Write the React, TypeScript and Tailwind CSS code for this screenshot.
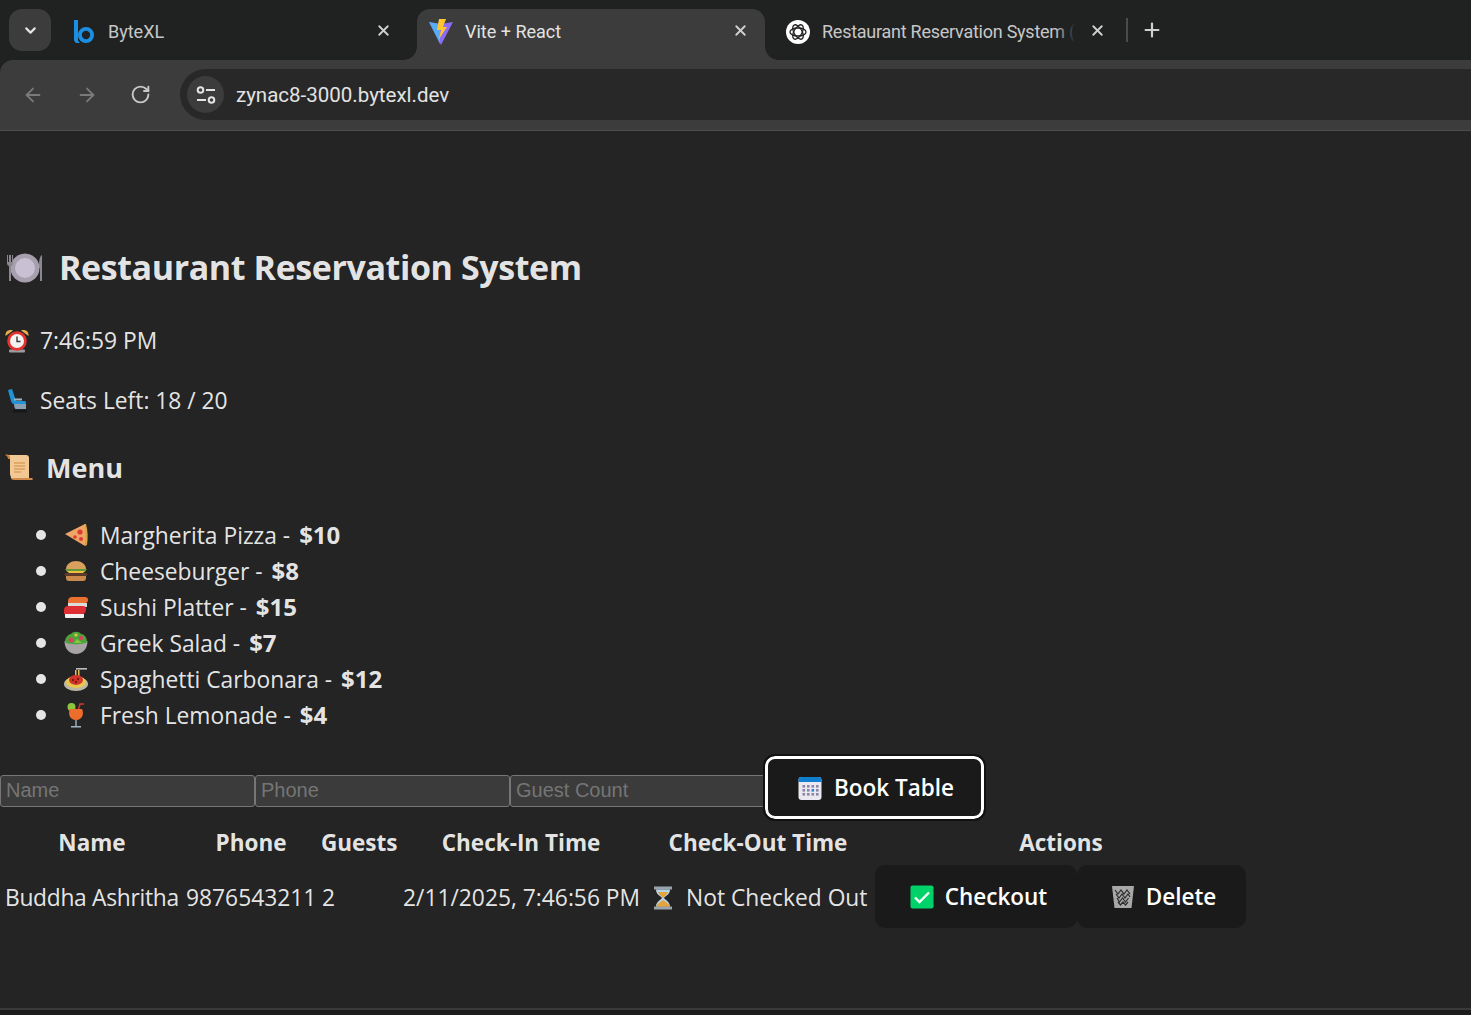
import { ArrowLeft, ArrowRight, ChevronDown, Plus, RotateCw, X } from "lucide-react";
import type { ReactNode } from "react";

// small emoji drawings, there is no colour emoji font on the box
function Plate() {
    return (
        <svg width="38" height="32" viewBox="0 0 38 32" className="mt-[2px] shrink-0">
            <circle cx="19" cy="16" r="14.5" fill="#a79fad" />
            <circle cx="19" cy="16" r="10" fill="#c9c1d3" />
            <path d="M1 3v8c0 2 1 3 2 3v15h2V14c1 0 2-1 2-3V3H6v7H5V3H3v7H2V3z" fill="#8b8690" />
            <path d="M36 3c-2 1-3 5-3 10v3h1v13h2z" fill="#8b8690" />
        </svg>
    );
}

function AlarmClock() {
    return (
        <svg width="24" height="24" viewBox="0 0 24 24" className="shrink-0">
            <path d="M0.500 7C0 2 4 0 8 1.500zM23.500 7C24 2 20 0 16 1.500z" fill="#e3b04b" />
            <rect x="4" y="20.500" width="16" height="3" rx="1" fill="#9b9ba1" />
            <circle cx="12" cy="12" r="9.800" fill="#e2332f" />
            <circle cx="12" cy="12" r="7" fill="#f5f2f2" />
            <path d="M12 7.500V12.500H15.500" stroke="#3a3a3a" strokeWidth="1.400" fill="none" />
        </svg>
    );
}

function Seat() {
    return (
        <svg width="20" height="24" viewBox="0 0 20 24" className="shrink-0">
            <path d="M1 1l4-1 4 12h9c1 0 1 2 1 3H7c-2 0-2-1-3-3z" fill="#1f93d6" />
            <rect x="7" y="9.500" width="8" height="2" fill="#9fb5c5" />
            <path d="M7 15h12v5H9c-1 0-2-2-2-5z" fill="#8aa0b0" />
            <rect x="6" y="21" width="14" height="2.500" fill="#15181b" />
        </svg>
    );
}

function Scroll() {
    return (
        <svg width="28" height="28" viewBox="0 0 28 28" className="shrink-0">
            <path d="M0 1c3-1 5 0 6 2v2H3C3 3 2 2 0 1z" fill="#c47c3b" />
            <path d="M3 1h18c2 0 3 1 3 3v20H6c0-2-1-3-1-4V4C5 2 4 1 3 1z" fill="#f2c994" />
            <path d="M9 9h11M9 12h11M9 15h11M9 18h7" stroke="#cf8a45" strokeWidth="1" />
            <path d="M6 24h21c1 0 1 2 0 2H9c-2 0-3-1-3-2z" fill="#d18b4a" />
        </svg>
    );
}

function Pizza() {
    return (
        <svg width="24" height="24" viewBox="0 0 24 24" className="shrink-0">
            <path d="M1 11L21 1c2 6 2 15 0 22z" fill="#eea565" />
            <path d="M20 1c2 6 2 16 1 22l2-1c1-7 1-14-1-21z" fill="#dba63e" />
            <circle cx="16" cy="9" r="2.600" fill="#de3b32" />
            <circle cx="11" cy="14" r="1.800" fill="#de3b32" />
            <circle cx="17" cy="16" r="2" fill="#de3b32" />
        </svg>
    );
}

function Burger() {
    return (
        <svg width="24" height="20" viewBox="0 0 24 20" className="shrink-0">
            <path d="M2 8C2 3 7 0 12 0s10 3 10 8z" fill="#d9a05e" />
            <path d="M1 8h22l-2 3H3z" fill="#5f9b3b" />
            <path d="M3 10h18l-2 2H5z" fill="#efc03f" />
            <rect x="0.500" y="12" width="23" height="3" rx="1.500" fill="#5b3a2a" />
            <path d="M2 15h20v2c0 2-1 3-3 3H5c-2 0-3-1-3-3z" fill="#c98a4b" />
        </svg>
    );
}

function Sushi() {
    return (
        <svg width="24" height="22" viewBox="0 0 24 22" className="shrink-0">
            <path d="M4 7h19v4H4z" fill="#dcdcdc" />
            <path d="M4 5c0-3 2-4 4-4h13c2 0 3 1 3 3s-1 3-3 3H4z" fill="#ea7131" />
            <path d="M1 18h19v3c0 1-1 1-2 1H3c-1 0-2 0-2-1z" fill="#f1f1f1" />
            <path d="M0 14c0-3 2-4 4-4h15c2 0 3 1 3 3s-1 5-3 5H0z" fill="#dd2f33" />
        </svg>
    );
}

function Salad() {
    return (
        <svg width="24" height="24" viewBox="0 0 24 24" className="shrink-0">
            <path d="M0.500 10h23c0 8-5 13-11.500 13S0.500 18 0.500 10z" fill="#a8a3a5" />
            <path d="M1 11c0-5 4-8 6-8 2-3 8-3 10 0 3 0 6 3 6 8-3 3-19 3-22 0z" fill="#4aa53b" />
            <circle cx="7" cy="9" r="2.500" fill="#d8425b" />
            <circle cx="17" cy="7" r="2.200" fill="#d8425b" />
            <circle cx="12" cy="4" r="1.600" fill="#e8c63f" />
            <path d="M13 8l5 4h-8z" fill="#8cc63f" />
        </svg>
    );
}

function Spaghetti() {
    return (
        <svg width="24" height="24" viewBox="0 0 24 24" className="shrink-0">
            <path d="M12 1h11v1.600H12z" fill="#bdbdbd" />
            <path d="M11 3h1.500v7H11zM14 3h1.500v7H14z" fill="#e3bd5a" />
            <ellipse cx="12" cy="17" rx="12" ry="7" fill="#bcb7a5" />
            <ellipse cx="12" cy="15" rx="10" ry="6" fill="#e8c84d" />
            <ellipse cx="12" cy="13" rx="7" ry="5" fill="#d3352c" />
            <circle cx="9" cy="13" r="1.200" fill="#7a1a14" />
            <circle cx="14" cy="12" r="1.200" fill="#7a1a14" />
            <circle cx="12" cy="15" r="1.200" fill="#7a1a14" />
        </svg>
    );
}

function Cocktail() {
    return (
        <svg width="24" height="26" viewBox="0 0 24 26" className="shrink-0">
            <circle cx="7.500" cy="5" r="4" fill="#8cc63f" />
            <path d="M14 9l2-7h4" stroke="#d8332c" strokeWidth="1.500" fill="none" />
            <path d="M6 7h12c2 4 1 11-6 11S4 11 6 7z" fill="#ed6d2d" />
            <path d="M11.300 18h1.400v6h-1.400z" fill="#9fb5c5" />
            <path d="M7 24h10v1.500H7z" fill="#9fb5c5" />
        </svg>
    );
}

function Calendar() {
    return (
        <svg width="24" height="24" viewBox="0 0 24 24" className="shrink-0">
            <rect x="0.500" y="1" width="23" height="23" rx="3" fill="#ece8f2" />
            <path d="M0.500 6V4c0-2 1-3 3-3h17c2 0 3 1 3 3v2z" fill="#0f7fd0" />
            {[6, 10.500, 15, 19.500].map((x) =>
                [9, 13, 17].map((y) => <rect key={`${x}-${y}`} x={x - 1.500} y={y} width="2.600" height="2.600" fill={x === 15 && y === 13 ? "#2f86d8" : "#8a86a3"} />),
            )}
        </svg>
    );
}

function CheckBox() {
    return (
        <svg width="24" height="24" viewBox="0 0 24 24" className="shrink-0">
            <rect x="0.500" y="0.500" width="23" height="23" rx="2" fill="#00d26a" />
            <path d="M5 12.500l4.500 4.500L19 7.500" stroke="#f5fff9" strokeWidth="2.400" fill="none" />
        </svg>
    );
}

function Wastebasket() {
    return (
        <svg width="24" height="24" viewBox="0 0 24 24" className="shrink-0">
            <path d="M1 1h22l-2.500 22h-17z" fill="#a8a8a8" />
            <path d="M4 5l3 4 3-4 3 4 3-4 3 4M5 9l3 4 3-4 3 4 3-4 2 3M6 13l2.500 4 3-4 3 4 3-4M7 17l2.500 3 2.500-3 2.500 3 2.500-3" stroke="#2b2b2b" strokeWidth="1.200" fill="none" />
        </svg>
    );
}

function Hourglass() {
    return (
        <svg width="20" height="24" viewBox="0 0 20 24" className="shrink-0">
            <rect x="1" y="0.500" width="18" height="3" fill="#9aa4ad" />
            <rect x="1" y="20.500" width="18" height="3" fill="#9aa4ad" />
            <path d="M3 3.500h14c0 5-4 6-6 8.500 2 2.500 6 4 6 8.500H3c0-4.500 4-6 6-8.500-2-2.500-6-3.500-6-8.500z" fill="#b7d3e6" />
            <path d="M5 6h10c-1 3-4 4-5 6-1-2-4-3-5-6zM3.500 20.500C4 17 8 16 10 14c2 2 6 3 6.500 6.500z" fill="#e5a43b" />
        </svg>
    );
}

function ByteXLLogo() {
    return (
        <svg width="20" height="24" viewBox="0 0 20 24">
            <path d="M0 0h4v20c0 1 1 2 2 3H2c-1-1-2-2-2-3z" fill="#1b8fe3" />
            <path d="M12 7a8 8 0 1 0 0 16 8 8 0 0 0 0-16zm0 3.800a4.200 4.200 0 1 1 0 8.400 4.200 4.200 0 0 1 0-8.400z" fill="#1b8fe3" />
        </svg>
    );
}

function ViteLogo() {
    return (
        <svg width="26" height="26" viewBox="0 0 26 26">
            <path d="M1 3l12 2 12-2-12 23z" fill="#8c6cf5" />
            <path d="M1 3l11 2v20z" fill="#41c6f5" opacity="0.700" />
            <path d="M11 0h7l-3 8h4l-8 12 2-9H9z" fill="#ffc62e" />
        </svg>
    );
}

function ChatLogo() {
    return (
        <svg width="24" height="24" viewBox="0 0 24 24">
            <circle cx="12" cy="12" r="12" fill="#fff" />
            <g stroke="#222" strokeWidth="1.300" fill="none">
                <ellipse cx="12" cy="12" rx="8" ry="4" />
                <ellipse cx="12" cy="12" rx="8" ry="4" transform="rotate(60 12 12)" />
                <ellipse cx="12" cy="12" rx="8" ry="4" transform="rotate(120 12 12)" />
            </g>
        </svg>
    );
}

function SiteInfo() {
    return (
        <svg width="20" height="20" viewBox="0 0 20 20" fill="none" stroke="#e3e3e3" strokeWidth="2">
            <circle cx="4.500" cy="5" r="2.800" />
            <path d="M10 5h9M1 15h9" />
            <circle cx="15.500" cy="15" r="2.800" />
        </svg>
    );
}

function Tab({ logo, title, active, fade }: { logo: ReactNode; title: string; active?: boolean; fade?: boolean }) {
    return (
        <div className={`relative flex h-[51px] w-[348px] shrink-0 items-center pb-[5px] ${active ? "rounded-t-[13px] bg-[#3c3c3c] text-[#e3e3e3]" : "text-[#c7c7c7]"}`}>
            {active && (
                <>
                    <span className="absolute -left-[13px] bottom-0 size-[13px] bg-[radial-gradient(circle_at_0_0,transparent_12.500px,#3c3c3c_13px)]" />
                    <span className="absolute -right-[13px] bottom-0 size-[13px] bg-[radial-gradient(circle_at_100%_0,transparent_12.500px,#3c3c3c_13px)]" />
                </>
            )}
            <span className="flex w-[48px] justify-center">{logo}</span>
            <span className={`w-[253px] overflow-hidden whitespace-nowrap font-['Roboto',sans-serif] text-[18px] ${fade ? "tracking-[-0.25px]" : ""}`}>{title}</span>
            {fade && <span className="absolute left-[281px] top-0 h-full w-[20px] bg-gradient-to-r from-transparent to-[#202222]" />}
            <X size={17} strokeWidth={2.600} className="absolute right-[16px] top-[13px] text-[#d0d0d0]" />
        </div>
    );
}

function Browser() {
    return (
        <div className="bg-[#202222]">
            <div className="flex h-[60px] items-end gap-[9px] pl-[9px]">
                <div className="mb-[9px] flex size-[42px] items-center justify-center rounded-[13px] bg-[#3c3c3c]">
                    <ChevronDown size={17} strokeWidth={3} className="text-[#e3e3e3]" />
                </div>
                <Tab logo={<ByteXLLogo />} title="ByteXL" />
                <Tab logo={<ViteLogo />} title="Vite + React" active />
                <Tab logo={<ChatLogo />} title="Restaurant Reservation System (" fade />
                <div className="mb-[18px] ml-[-5px] h-[24px] w-[2px] shrink-0 bg-[#4a4c4c]" />
                <Plus size={22} strokeWidth={2.400} className="mb-[19px] ml-[4px] shrink-0 text-[#d0d0d0]" />
            </div>
            <div className="flex h-[70px] items-start rounded-tl-[13px] bg-[#3c3c3c] pt-[9px]">
                <div className="flex h-[51px] w-[180px] items-center gap-[32px] pl-[22px]">
                    <ArrowLeft size={22} strokeWidth={2} className="text-[#7a7a7a]" />
                    <ArrowRight size={22} strokeWidth={2} className="text-[#7a7a7a]" />
                    <RotateCw size={21} strokeWidth={2.200} className="text-[#c8c8c8]" />
                </div>
                <div className="flex h-[51px] flex-1 items-center rounded-l-full bg-[#282828]">
                    <div className="ml-[7px] flex size-[37px] items-center justify-center rounded-full bg-[#3c3c3c]">
                        <SiteInfo />
                    </div>
                    <span className="ml-[12px] font-['Roboto',sans-serif] text-[20.500px] text-[#e3e3e3]">zynac8-3000.bytexl.dev</span>
                </div>
            </div>
            <div className="h-[1px] bg-[#4c4c4c]" />
        </div>
    );
}

const menu: [ReactNode, string, string][] = [
    [<Pizza />, "Margherita Pizza", "$10"],
    [<Burger />, "Cheeseburger", "$8"],
    [<Sushi />, "Sushi Platter", "$15"],
    [<Salad />, "Greek Salad", "$7"],
    [<Spaghetti />, "Spaghetti Carbonara", "$12"],
    [<Cocktail />, "Fresh Lemonade", "$4"],
];

const inputClass = "mt-[19px] h-[32px] w-[255px] rounded-[3px] border border-[#767676] bg-[#3b3b3b] px-[5px] pb-[2px] font-['Liberation_Sans',sans-serif] text-[20px] placeholder:text-[#757575]";
const buttonClass = "flex h-[63px] items-center gap-[11px] rounded-[10px] bg-[#1a1a1a] text-[22.500px] font-semibold text-white";

export default function App() {
    return (
        <div className="flex h-[1015px] flex-col overflow-hidden bg-[#242424] font-['Open_Sans',sans-serif] text-[22.800px] leading-[36px] text-[rgba(255,255,255,0.9)]">
            <Browser />
            <main className="h-[877px] pt-[109px]">
                <h1 className="flex h-[54px] items-center gap-[15px] pl-[6px] text-[34px] font-bold tracking-[-0.4px]">
                    <Plate />
                    Restaurant Reservation System
                </h1>
                <p className="mt-[29px] flex items-center gap-[11px] pl-[5px]"><AlarmClock /> 7:46:59 PM</p>
                <p className="mt-[24px] flex items-center gap-[13px] pl-[7px]"><Seat /> Seats Left: 18 / 20</p>
                <h2 className="mt-[29px] flex h-[40px] items-center gap-[13px] pl-[5px] text-[27px] font-bold"><Scroll /> Menu</h2>
                <ul className="mt-[29px] list-none">
                    {menu.map(([icon, name, price]) => (
                        <li key={name} className="flex h-[36px] items-center">
                            <span className="ml-[36px] mr-[18px] size-[10px] rounded-full bg-[#e5e5e5]" />
                            <span className="flex w-[36px]">{icon}</span>
                            <span>{name} - <b className="ml-[3px] text-[24px]">{price}</b></span>
                        </li>
                    ))}
                </ul>
                <form className="mt-[23px] flex items-start">
                    <input className={inputClass} placeholder="Name" />
                    <input className={inputClass} placeholder="Phone" />
                    <input className={inputClass} placeholder="Guest Count" />
                    <button type="button" className={`${buttonClass} w-[219px] justify-center gap-[12px] border-[3px] border-white pl-[3px] outline-2 outline-[#111]`}>
                        <Calendar /> Book Table
                    </button>
                </form>
                <table className="mt-[3px] w-[1250px] table-fixed border-separate border-spacing-[2px]">
                    <thead>
                        <tr className="h-[36px] text-[22.500px] font-bold">
                            <th className="w-[180px] p-[1px]">Name</th>
                            <th className="w-[134px] p-[1px]">Phone</th>
                            <th className="w-[78px] p-[1px]">Guests</th>
                            <th className="w-[242px] p-[1px]">Check-In Time</th>
                            <th className="w-[228px] p-[1px]">Check-Out Time</th>
                            <th className="w-[374px] p-[1px]">Actions</th>
                        </tr>
                    </thead>
                    <tbody>
                        <tr>
                            <td className="whitespace-nowrap p-[1px] pt-[3px] pl-[3px] tracking-[-0.3px]">Buddha Ashritha</td>
                            <td className="p-[1px] pt-[3px] pl-[2px]">9876543211</td>
                            <td className="p-[1px] pt-[3px] pl-[2px]">2</td>
                            <td className="whitespace-nowrap p-[1px] pt-[3px] pl-[3px]">2/11/2025, 7:46:56 PM</td>
                            <td className="p-[1px] pt-[3px]">
                                <span className="flex items-center gap-[13px] whitespace-nowrap pl-[8px]"><Hourglass /> Not Checked Out</span>
                            </td>
                            <td className="p-[1px]">
                                <div className="flex">
                                    <button type="button" className={`${buttonClass} w-[202px] justify-center pl-[5px]`}><CheckBox /> Checkout</button>
                                    <button type="button" className={`${buttonClass} w-[169px] justify-center pl-[4px]`}><Wastebasket /> Delete</button>
                                </div>
                            </td>
                        </tr>
                    </tbody>
                </table>
            </main>
            <div className="h-[2px] bg-[#3a3a3a]" />
            <div className="flex-1 bg-[#1c1c1c]" />
        </div>
    );
}
